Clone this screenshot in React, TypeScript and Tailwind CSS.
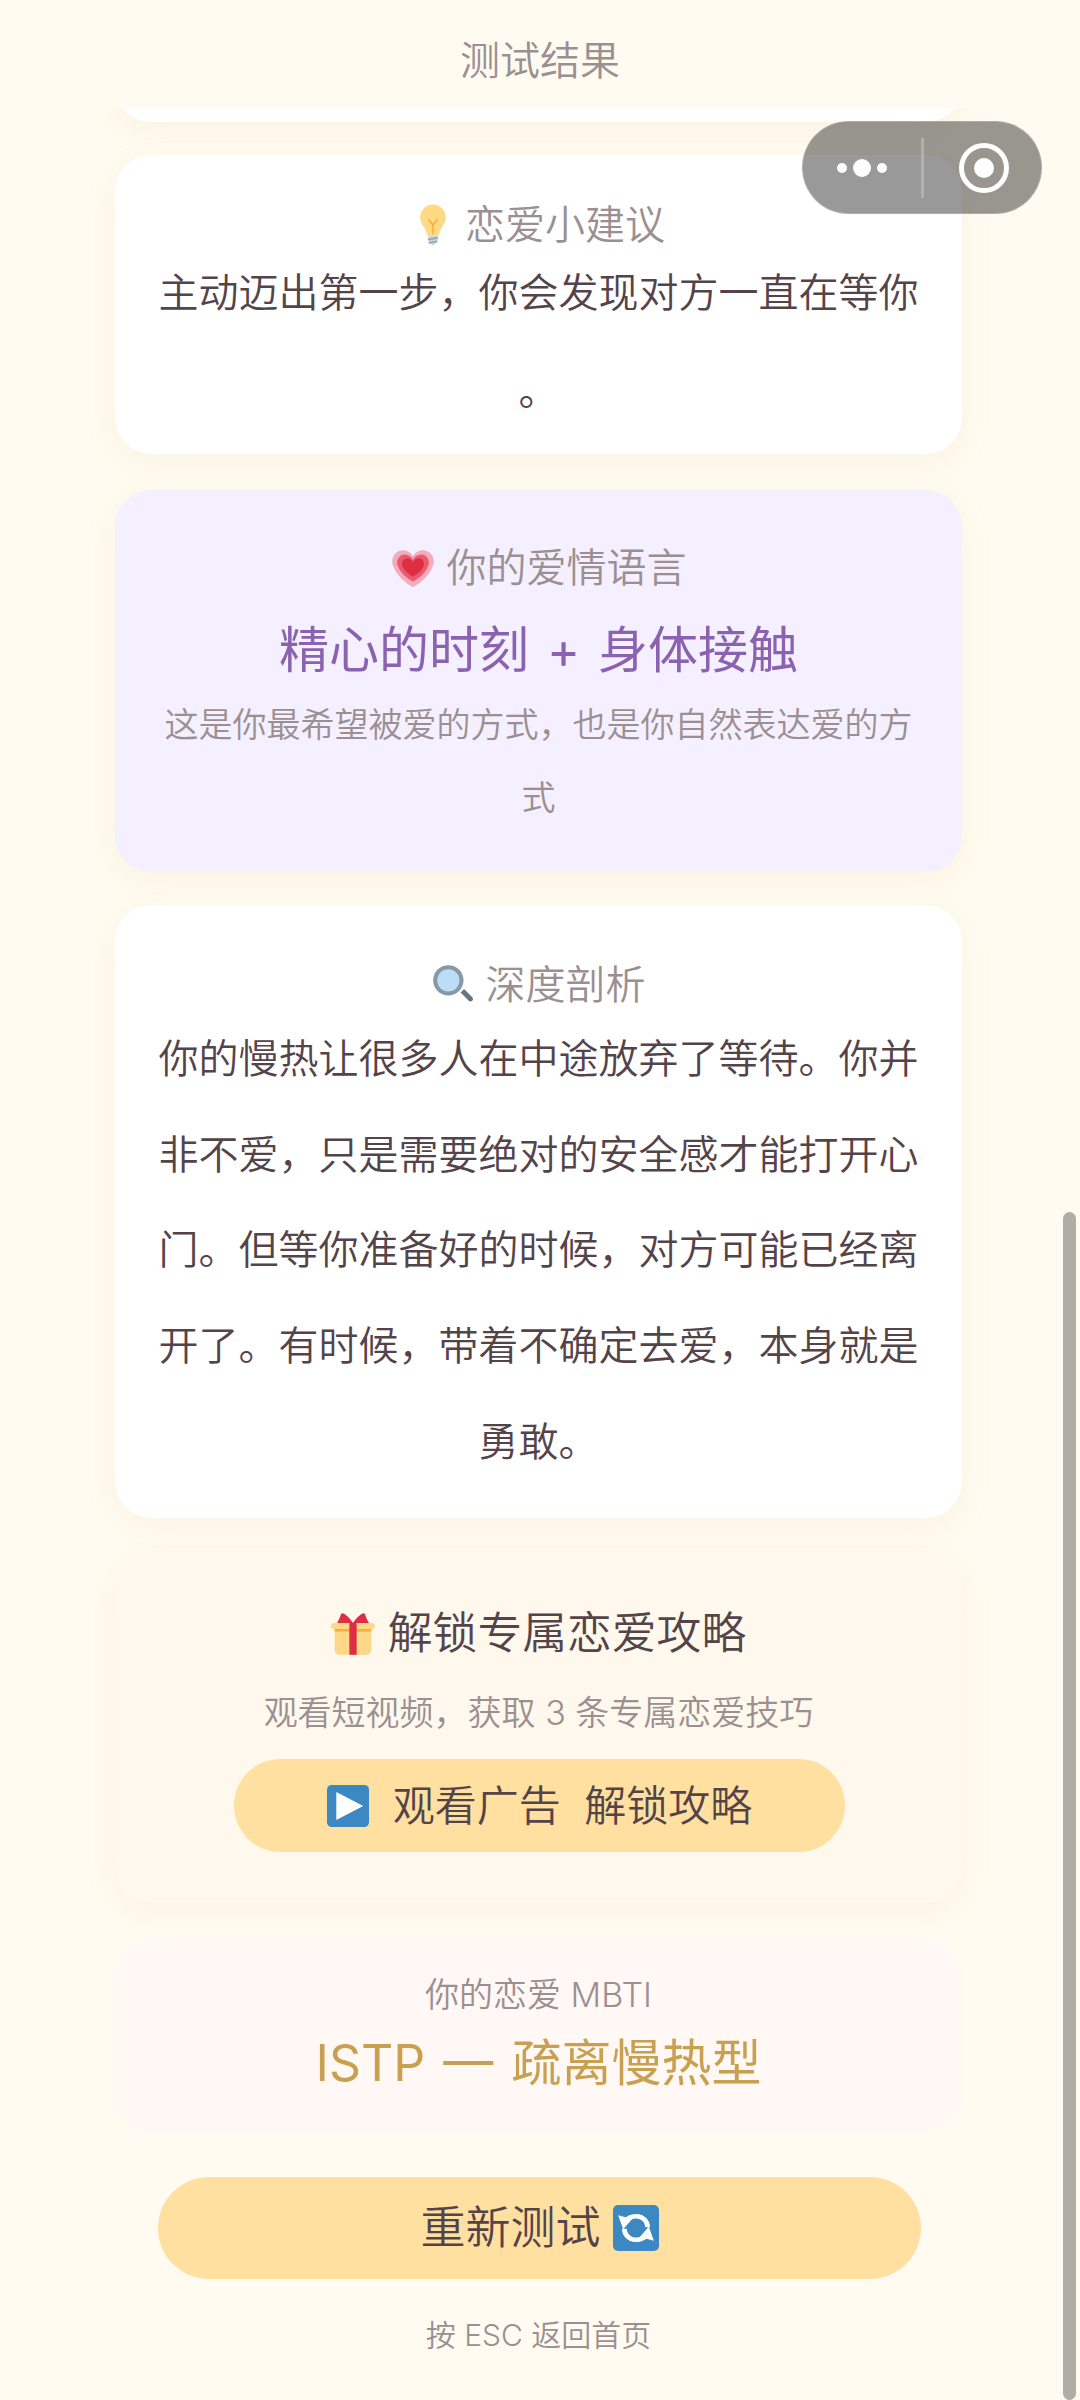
import React from "react";

const Bulb = () => (
  <svg viewBox="0 0 36 36" className="w-[42px] h-[42px] shrink-0">
    <path d="M29 11.500C29 17.500 24 20 23.500 25.500c0 1-1 1.500-1.500 1.500h-8c-.8 0-1.500-.5-1.500-1.500C12 20 7 17.500 7 11.500 7 5.400 12 .5 18 .5s11 4.900 11 11z" fill="#FFD983" />
    <path d="M22 27h-8c-.5 2 0 7 4 8.500 4-1.500 4.500-6.500 4-8.500z" fill="#CCD6DD" />
    <path d="M13.600 29.500l8.800-1.500v1.700l-8.800 1.500zM14.200 32.500l7.600-1.300v1.500l-7.600 1.300z" fill="#99AAB5" />
    <path d="M18 26v-8M18 18l-4-5M18 18l4-5" stroke="#FFAC33" strokeWidth="1.300" fill="none" />
  </svg>
);

const Heart = () => (
  <svg viewBox="0 0 36 36" className="w-[44px] h-[44px] shrink-0">
    <path d="M35 12.500C35 7.500 31 3.500 26 3.500c-3.400 0-6.400 2-8 4.800-1.600-2.800-4.600-4.800-8-4.800-5 0-9 4-9 9 0 1.400.2 2.700.8 3.900C4.500 24.500 13 31.500 18 33.500c5-2 13.500-9 16.200-17.100.6-1.200.8-2.500.8-3.900z" fill="#F4ABBA" />
    <path d="M31 13.500c0-3.600-2.900-6.500-6.500-6.500-2.800 0-5.200 1.800-6.500 4.200C16.700 8.800 14.300 7 11.500 7 7.900 7 5 9.900 5 13.500c0 1 .2 1.800.6 2.700C7.600 22.200 14.300 27.500 18 29c3.700-1.500 10.400-6.800 12.400-12.800.4-.9.600-1.700.6-2.700z" fill="#EA596E" />
    <path d="M27 14.500c0-2.500-2-4.500-4.500-4.500-2 0-3.600 1.500-4.500 3.300C17.100 11.500 15.500 10 13.500 10 11 10 9 12 9 14.500c0 .7.100 1.300.4 1.900C10.900 20.700 15.500 24 18 25c2.500-1 7.100-4.300 8.600-8.600.3-.6.400-1.200.4-1.900z" fill="#DD2E44" />
  </svg>
);

const Search = () => (
  <svg viewBox="0 0 36 36" className="w-[42px] h-[42px] shrink-0">
    <path d="M24.500 24.500l3-3 7 7c.8.8.8 2.200 0 3s-2.200.8-3 0z" fill="#66757F" />
    <circle cx="14" cy="14" r="13" fill="#8899A6" />
    <circle cx="14" cy="14" r="9.500" fill="#BBDDF5" />
  </svg>
);

const Gift = () => (
  <svg viewBox="0 0 36 36" className="w-[44px] h-[44px] shrink-0">
    <path d="M33 31c0 2.200-1.800 4-4 4H7c-2.200 0-4-1.800-4-4V13h30z" fill="#FDD888" />
    <path d="M36 11.500c0 1.400-1.100 2.500-2.500 2.500h-31C1.100 14 0 12.900 0 11.500S1.100 9 2.500 9h31c1.400 0 2.500 1.100 2.500 2.500z" fill="#FDD888" />
    <path d="M3 14h30v2H3z" fill="#FFAC33" />
    <path d="M15 9h6v26h-6z" fill="#DD2E44" />
    <path d="M18 9c-2-3-6-8-9-8-1 0-1 2-2 4-.5 1.500-1.500 3-2 4zM18 9c2-3 6-8 9-8 1 0 1 2 2 4 .5 1.500 1.500 3 2 4z" fill="#DD2E44" />
  </svg>
);

const Play = () => (
  <svg viewBox="0 0 36 36" className="w-[42px] h-[42px] shrink-0">
    <rect x="0" y="0" width="36" height="36" rx="4" fill="#3B88C3" />
    <path d="M8 6l23 12-23 12z" fill="#FFFFFF" />
  </svg>
);

const Refresh = () => (
  <svg viewBox="0 0 36 36" className="w-[46px] h-[46px] shrink-0">
    <rect x="0" y="0" width="36" height="36" rx="4" fill="#3B88C3" />
    <path d="M6.500 14.500C8 10 12.500 7 18 7c3.200 0 6.200 1.200 8.200 3.400 1.800 1.900 2.800 4.400 2.800 7.100h-3.800c0-1.800-.7-3.500-1.900-4.700C21.800 11.300 20 10.600 18 10.600c-3 0-5.500 1.400-7 3.900z" fill="#FFFFFF" />
    <path d="M4 8l11 3-7 8z" fill="#FFFFFF" />
    <path d="M29.500 21.500C28 26 23.500 29 18 29c-3.200 0-6.200-1.200-8.200-3.400C8 23.700 7 21.200 7 18.500h3.800c0 1.800.7 3.500 1.900 4.700 1.500 1.500 3.300 2.200 5.300 2.200 3 0 5.500-1.400 7-3.900z" fill="#FFFFFF" />
    <path d="M32 28l-11-3 7-8z" fill="#FFFFFF" />
  </svg>
);

const card = "w-full rounded-[36px] text-center shadow-[0_8px_30px_rgba(214,190,140,0.12)]";

export default function App() {
  return (
    <div
      className="relative w-[1080px] h-[2400px] overflow-hidden bg-[#FFFBF0] text-[#54444A]"
      style={{ fontFamily: 'Inter, "Noto Sans CJK SC", sans-serif', fontWeight: 350 }}
    >
      <header className="relative z-10 flex h-[108px] items-center justify-center bg-[#FFFBF0] pt-[14px] text-[40px] text-[#9B8F92]">
        测试结果
      </header>

      <main className="flex flex-col pl-[115px] pr-[118px]">
        <div className="-mt-[36px] h-[50px] w-full rounded-b-[36px] bg-white shadow-[0_8px_30px_rgba(214,190,140,0.12)]" />

        <section className={`${card} mt-[33px] h-[299px] bg-white px-[42px] pt-[44px]`}>
          <h2 className="flex h-[52px] items-center justify-center gap-[11px] text-[40px] text-[#9B8F92]">
            <Bulb />
            恋爱小建议
          </h2>
          <p className="text-[40px] leading-[98px] mt-[-7px] [line-break:anywhere]">主动迈出第一步，你会发现对方一直在等你。</p>
        </section>

        <section className={`${card} mt-[36px] h-[382px] bg-[#F5F0FF] px-[42px] pt-[50px]`}>
          <h2 className="flex h-[56px] items-center justify-center gap-[12px] text-[40px] text-[#9B8F92]">
            <Heart />
            你的爱情语言
          </h2>
          <div className="mt-[19px] text-[50px] font-normal leading-[70px] text-[#8A62B0] [word-spacing:4px]">精心的时刻 + 身体接触</div>
          <p className="mt-[3px] text-[34px] leading-[73px] text-[#9B8F92]">这是你最希望被爱的方式，也是你自然表达爱的方式</p>
        </section>

        <section className={`${card} mt-[33px] h-[613px] bg-white px-[42px] pt-[54px]`}>
          <h2 className="flex h-[52px] items-center justify-center gap-[12px] text-[40px] text-[#9B8F92]">
            <Search />
            深度剖析
          </h2>
          <p className="text-[40px] leading-[95.700px]">
            你的慢热让很多人在中途放弃了等待。你并非不爱，只是需要绝对的安全感才能打开心门。但等你准备好的时候，对方可能已经离开了。有时候，带着不确定去爱，本身就是勇敢。
          </p>
        </section>

        <section className={`${card} mt-[34px] flex h-[351px] flex-col items-center bg-[#FFF8EC] pt-[54px]`}>
          <h2 className="flex h-[56px] items-center justify-center gap-[13px] text-[44.800px] text-[#54444A]">
            <Gift />
            解锁专属恋爱攻略
          </h2>
          <p className="mt-[28px] h-[46px] text-[34px] leading-[46px] text-[#9B8F92]">观看短视频，获取 3 条专属恋爱技巧</p>
          <button className="mt-[23px] ml-[2px] flex h-[93px] w-[611px] items-center justify-center gap-[24px] rounded-full bg-[#FFE0A0] text-[42px] text-[#54444A]">
            <Play />
            <span className="whitespace-pre">观看广告  解锁攻略</span>
          </button>
        </section>

        <section className={`${card} mt-[36px] flex h-[195px] flex-col items-center bg-[#FFF8F5] pt-[32px] shadow-none`}>
          <div className="h-[48px] text-[34px] leading-[48px] text-[#9B8F92]">你的恋爱 MBTI</div>
          <div className="mt-[8px] text-[50px] font-normal leading-[72px] text-[#C9A050] [word-spacing:4px]">ISTP — 疏离慢热型</div>
        </section>

        <button className="mt-[43px] ml-[43px] flex h-[102px] w-[763px] items-center justify-center gap-[12px] rounded-full bg-[#FFE0A0] text-[45px] text-[#54444A]">
          重新测试
          <Refresh />
        </button>

        <div className="mt-[32px] text-center text-[30px] leading-[48px] text-[#9B8F92]">按 ESC 返回首页</div>
      </main>

      <div className="absolute right-[38px] top-[121px] z-20 flex h-[93px] w-[240px] items-center rounded-full border border-white/20 bg-black/40">
        <div className="flex w-[118px] items-center justify-center gap-[6px]">
          <span className="h-[10px] w-[10px] rounded-full bg-white" />
          <span className="h-[18px] w-[18px] rounded-full bg-white" />
          <span className="h-[10px] w-[10px] rounded-full bg-white" />
        </div>
        <div className="h-[60px] w-[3px] bg-white/25" />
        <div className="flex flex-1 items-center justify-center pl-[3px]">
          <div className="flex h-[50px] w-[50px] items-center justify-center rounded-full border-[5px] border-white">
            <div className="h-[20px] w-[20px] rounded-full bg-white" />
          </div>
        </div>
      </div>

      <div className="absolute bottom-0 right-[4px] top-[1212px] w-[13px] rounded-full bg-[#B0ADA5]" />
    </div>
  );
}
